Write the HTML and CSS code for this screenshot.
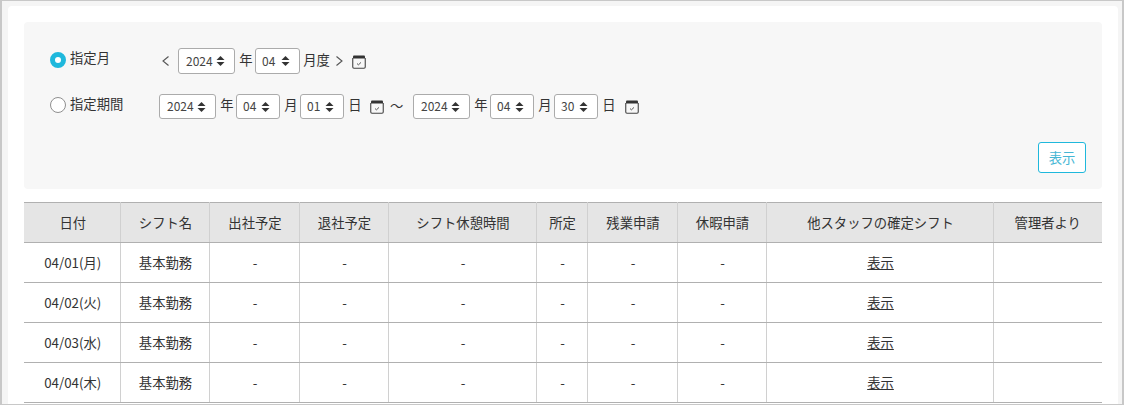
FILE: index.html
```html
<!DOCTYPE html>
<html lang="ja">
<head>
<meta charset="utf-8">
<title>シフト</title>
<link rel="stylesheet" href="styles.css">
</head>
<body>
<svg class="defs" width="0" height="0" aria-hidden="true">
  <symbol id="updown" viewBox="0 0 9 10"><path d="M4.5 0 8.5 4H.5Z M4.5 10 .5 6H8.5Z"/></symbol>
  <symbol id="cal" viewBox="0 0 14 14"><path class="cal-top" d="M1 1.5Q1 .5 2 .5H12Q13 .5 13 1.5V3.5H1Z"/><path class="cal-box" d="M.75 3V12Q.75 13.25 2 13.25H12Q13.25 13.25 13.25 12V3"/><path class="cal-check" d="M5 8.6 6.5 9.8 9 7.4"/></symbol>
</svg>
<div class="frame">
  <main class="card">
    <section class="panel">
      <div class="row row-month">
        <label class="choice"><span class="radio radio-on"></span><span class="choice-text">指定月</span></label>
        <div class="controls">
          <svg class="chev chev-prev" viewBox="0 0 7 10"><path d="M6.5 .5 1 5 6.5 9.5"/></svg>
          <div class="sel sel-year sel-tall">2024<svg class="updown"><use href="#updown"/></svg></div>
          <span class="unit">年</span>
          <div class="sel sel-small sel-tall sel-wide">04<svg class="updown"><use href="#updown"/></svg></div>
          <span class="unit unit-wide">月度</span>
          <svg class="chev chev-next" viewBox="0 0 7 10"><path d="M.5 .5 6 5 .5 9.5"/></svg>
          <svg class="cal cal-month"><use href="#cal"/></svg>
        </div>
      </div>
      <div class="row row-range">
        <label class="choice"><span class="radio"></span><span class="choice-text">指定期間</span></label>
        <div class="controls">
          <div class="sel sel-year">2024<svg class="updown"><use href="#updown"/></svg></div>
          <span class="unit">年</span>
          <div class="sel sel-small">04<svg class="updown"><use href="#updown"/></svg></div>
          <span class="unit">月</span>
          <div class="sel sel-small">01<svg class="updown"><use href="#updown"/></svg></div>
          <span class="unit">日</span>
          <svg class="cal cal-range"><use href="#cal"/></svg>
          <span class="tilde">～</span>
          <div class="sel sel-year">2024<svg class="updown"><use href="#updown"/></svg></div>
          <span class="unit">年</span>
          <div class="sel sel-small">04<svg class="updown"><use href="#updown"/></svg></div>
          <span class="unit">月</span>
          <div class="sel sel-small">30<svg class="updown"><use href="#updown"/></svg></div>
          <span class="unit">日</span>
          <svg class="cal cal-end"><use href="#cal"/></svg>
        </div>
      </div>
      <div class="actions"><button class="show-btn" type="button">表示</button></div>
    </section>
    <table class="shifts">
      <colgroup>
        <col class="c1"><col class="c2"><col class="c3"><col class="c4"><col class="c5">
        <col class="c6"><col class="c7"><col class="c8"><col class="c9"><col class="c10">
      </colgroup>
      <thead>
        <tr><th>日付</th><th>シフト名</th><th>出社予定</th><th>退社予定</th><th>シフト休憩時間</th><th>所定</th><th>残業申請</th><th>休暇申請</th><th>他スタッフの確定シフト</th><th>管理者より</th></tr>
      </thead>
      <tbody>
        <tr><td>04/01(月)</td><td>基本勤務</td><td>-</td><td>-</td><td>-</td><td>-</td><td>-</td><td>-</td><td><a href="#">表示</a></td><td></td></tr>
        <tr><td>04/02(火)</td><td>基本勤務</td><td>-</td><td>-</td><td>-</td><td>-</td><td>-</td><td>-</td><td><a href="#">表示</a></td><td></td></tr>
        <tr><td>04/03(水)</td><td>基本勤務</td><td>-</td><td>-</td><td>-</td><td>-</td><td>-</td><td>-</td><td><a href="#">表示</a></td><td></td></tr>
        <tr><td>04/04(木)</td><td>基本勤務</td><td>-</td><td>-</td><td>-</td><td>-</td><td>-</td><td>-</td><td><a href="#">表示</a></td><td></td></tr>
      </tbody>
    </table>
  </main>
</div>
</body>
</html>
```

FILE: styles.css
```css
* { box-sizing: border-box; }

html, body {
  margin: 0;
  height: 405px;
  overflow: hidden;
}

body {
  font-family: "Noto Sans CJK JP", "Noto Sans", sans-serif;
  font-size: 13.33px;
  color: #333;
  background: #f5f5f5;
}

.defs { position: absolute; }

.frame {
  height: 405px;
  border: solid #c8c8c8;
  border-width: 1px 2px 1px 2px;
  background: #f5f5f5;
  padding: 5px 4px 0 6px;
  overflow: hidden;
}

.card {
  background: #fff;
  border-radius: 4px 4px 0 0;
  padding: 16px 16px 0;
  height: 500px;
}

.panel {
  background: #f7f7f7;
  border-radius: 4px;
  height: 167px;
  padding: 26px 16px 16px 26px;
}

.row {
  display: flex;
  align-items: center;
}

.row-month { height: 26px; }
.row-range { height: 25px; margin-top: 20px; }

.choice {
  display: flex;
  align-items: center;
  gap: 4px;
  width: 109px;
  flex: none;
}

.row-month .choice { margin-top: -2px; }
.row-range .choice { margin-top: -3px; }

.choice-text { line-height: 16px; margin-top: -3px; }
.row-month .choice-text { margin-top: -5px; }

.radio {
  width: 16px;
  height: 16px;
  border-radius: 50%;
  background: #fff;
  border: 1px solid #8f8f8f;
  flex: none;
}

.radio-on {
  border: 5px solid #1fb8dc;
}

.controls {
  display: flex;
  align-items: center;
  height: 100%;
}

.sel {
  display: flex;
  align-items: center;
  justify-content: space-between;
  height: 25px;
  padding: 0 9px 2px 7px;
  background: #fff;
  border: 1px solid #ababab;
  border-radius: 3px;
  font-size: 12px;
  color: #444;
}

.sel-tall { height: 26px; }
.sel-year { width: 57px; }
.sel-small { width: 44px; padding-left: 6px; }
.sel-wide { width: 45px; }

.updown {
  width: 9px;
  height: 10px;
  fill: #333;
  margin-top: 2px;
}

.unit {
  width: 20px;
  padding-left: 2px;
  text-align: center;
  line-height: 20px;
  margin-top: -3px;
}

.unit-wide { width: 33px; padding-left: 0; }

.chev {
  width: 7px;
  height: 10px;
  fill: none;
  stroke: #555;
  stroke-width: 1.1;
  flex: none;
}

.chev-prev { margin: 0 9px 0 3px; }
.chev-next { margin: 0 9px 0 3px; }

.cal {
  width: 14px;
  height: 14px;
  flex: none;
}

.cal-top { fill: #333; }
.cal-box { fill: none; stroke: #444; stroke-width: 1.1; }
.cal-check { fill: none; stroke: #555; stroke-width: 1; }

.cal-month { margin-top: 1px; }
.cal-range { margin: 1px 6px 0 6px; }
.cal-end { margin: 1px 0 0 7px; }

.tilde {
  width: 23px;
  line-height: 20px;
  margin-top: -2px;
}

.actions {
  display: flex;
  justify-content: flex-end;
  margin-top: 23px;
}

.show-btn {
  width: 48px;
  height: 31px;
  padding: 0;
  background: #fff;
  border: 1px solid #1fb8dc;
  border-radius: 3px;
  color: #45b6d4;
  font: inherit;
}

.shifts {
  width: 1078px;
  margin-top: 13px;
  table-layout: fixed;
  border-collapse: collapse;
  text-align: center;
}

.c1 { width: 96px; }
.c2 { width: 89px; }
.c3 { width: 90px; }
.c4 { width: 89px; }
.c5 { width: 148px; }
.c6 { width: 51px; }
.c7 { width: 90px; }
.c8 { width: 89px; }
.c9 { width: 227px; }
.c10 { width: 109px; }

.shifts th,
.shifts td {
  height: 40px;
  padding: 0 0 0 2px;
  border-top: 1px solid #b0b0b0;
  border-bottom: 1px solid #b0b0b0;
  border-left: 1px solid #d0d0d0;
  border-right: 1px solid #d0d0d0;
  font-weight: 400;
}

.shifts th { background: #e5e5e5; }

.shifts th:first-child,
.shifts td:first-child { border-left: 0; }

.shifts th:last-child,
.shifts td:last-child { border-right: 0; padding-left: 0; }

.shifts a { color: #333; }
```
